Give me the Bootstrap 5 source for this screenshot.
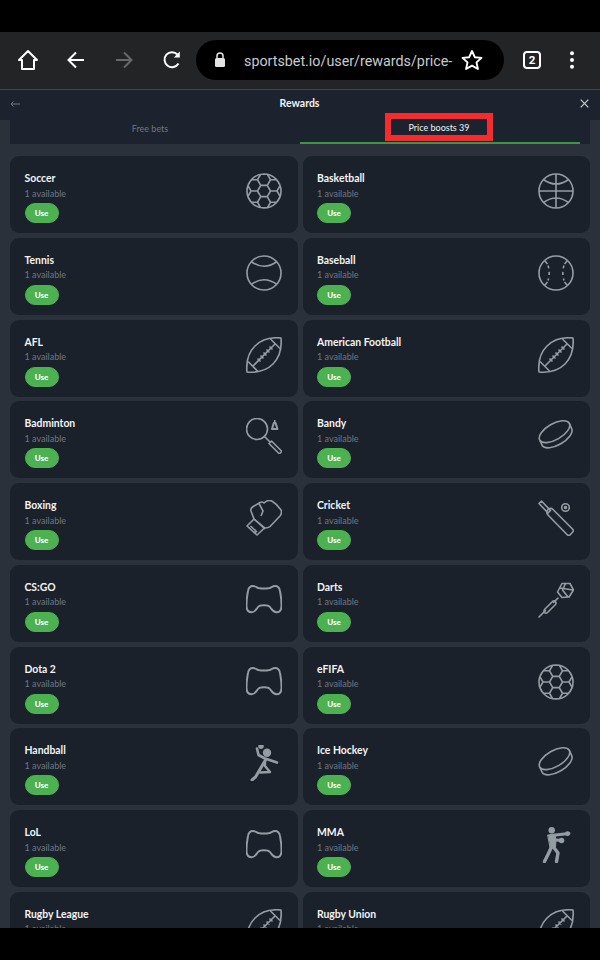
<!DOCTYPE html>
<html lang="en">
<head>
<meta charset="utf-8">
<title>Rewards</title>
<link href="https://cdn.jsdelivr.net/npm/bootstrap@5.3.0/dist/css/bootstrap.min.css" rel="stylesheet">
<style>
html,body{margin:0;background:#000;}
body{width:600px;height:960px;overflow:hidden;font-family:"Lato","Liberation Sans",sans-serif;}
.phone-frame{width:600px;height:960px;}
.blackbar-top{height:32px;background:#000;flex:none;}
.blackbar-bottom{height:32px;background:#000;flex:none;}
.chrome-bar{height:58px;background:#232426;border-bottom:1px solid #44464a;flex:none;padding:0 0 1px;}
.chrome-ico{flex:none;display:block;}
.ico-slot{width:48px;flex:none;display:flex;justify-content:center;}
.slot-home{width:52px;margin-left:2px;}
.slot-back{margin-left:-2px;}
.slot-tabs{margin-left:4px;}
.slot-menu{margin-left:-8px;}
.url-pill{width:308px;height:40px;background:#000;border-radius:20px;padding-left:18px;flex:none;}
.url-text{font-family:Roboto,"Liberation Sans",sans-serif;font-size:14.3px;color:#c9cacc;margin-left:18px;margin-top:3px;width:207px;white-space:nowrap;}
.star-ico{margin-left:10px;}
.defs-holder{position:absolute;width:0;height:0;}
.app-area{flex:1 1 auto;min-height:0;overflow:hidden;background:#2a313a;}
.app-head{height:30px;background:#1c232e;padding:0 11px 3px 10px;flex:none;}
.head-title{font-size:10.5px;font-weight:700;color:#f2f3f4;margin-left:-1px;}
.tabs-wrap{margin:0 10px;height:24px;background:#1c232e;flex:none;}
.tab-cell{width:280px;height:24px;font-size:9px;color:#6f7782;padding-bottom:6px;}
.tab-active{color:#fff;border-bottom:2px solid #3d9645;margin-left:10px;padding-bottom:4px;}
.red-mark{border:6px solid #f52c2f;height:28px;width:108px;margin-top:-4px;margin-left:-2px;padding-top:1px;display:flex;align-items:center;justify-content:center;white-space:nowrap;color:#f4f5f6;}
.sport-grid{display:grid;grid-template-columns:287.5px 287.5px;column-gap:5px;row-gap:4.75px;padding:12px 10px 0;}
.sport-tile{height:77px;background:#1b212b;border-radius:9px;padding:15px 16px 0 14.5px;}
.sport-name{font-size:10.4px;font-weight:700;line-height:14px;color:#f3f4f5;}
.sport-sub{font-size:9px;line-height:13px;margin-top:1.5px;color:#6e7681;}
.btn.use-pill{--bs-btn-bg:#4cb151;--bs-btn-color:#fff;--bs-btn-border-color:#4cb151;width:34px;height:20px;padding:0;font-size:8px;font-weight:900;line-height:18px;border-radius:10px;margin-top:3.5px;display:block;}
.sport-ico{width:36px;height:36px;flex:none;margin-top:2px;color:#959da4;}
</style>
</head>
<body>
<svg class="defs-holder" aria-hidden="true">
<defs>
<clipPath id="ball-clip"><circle cx="18" cy="18" r="17"/></clipPath>
<symbol id="i-soccer" viewBox="0 0 36 36"><g fill="none" stroke="currentColor" stroke-width="1.6" stroke-linejoin="round"><circle cx="18" cy="18" r="17"/><g clip-path="url(#ball-clip)"><path d="M11.500 18l3.250-5.630h6.500l3.250 5.630-3.250 5.630h-6.500zM11.500 6.740l3.250-5.630h6.500l3.250 5.630-3.250 5.630h-6.500zM11.500 29.260l3.250-5.630h6.500l3.250 5.630-3.250 5.630h-6.500zM1.750 12.370l3.250-5.630h6.500l3.250 5.630-3.250 5.630h-6.500zM21.250 12.370l3.250-5.630h6.500l3.250 5.630-3.250 5.630h-6.500zM1.750 23.630l3.250-5.630h6.500l3.250 5.630-3.250 5.630h-6.500zM21.250 23.630l3.250-5.630h6.500l3.250 5.630-3.250 5.630h-6.500z"/></g></g></symbol>
<symbol id="i-basket" viewBox="0 0 36 36"><g fill="none" stroke="currentColor" stroke-width="1.600"><circle cx="18" cy="18" r="17"/><path d="M1 18h34M18 1v34M5.500 6.500Q18 15.500 30.500 6.500M5.500 29.500Q18 20.500 30.500 29.500"/></g></symbol>
<symbol id="i-tennis" viewBox="0 0 36 36"><g fill="none" stroke="currentColor" stroke-width="1.600"><circle cx="18" cy="18" r="17"/><path d="M5 6.500Q18 16 31 6.500M5 29.500Q18 20 31 29.500"/></g></symbol>
<symbol id="i-baseball" viewBox="0 0 36 36"><g fill="none" stroke="currentColor" stroke-width="1.600"><circle cx="18" cy="18" r="17"/><path d="M6.500 5.500L9.500 9M29.500 5.500L26.500 9M6.500 30.500L9.500 27M29.500 30.500L26.500 27"/><path stroke-dasharray="3 3.500" d="M10 10.500c1.600 4.500 1.600 10.500 0 15M26 10.500c-1.600 4.500-1.600 10.500 0 15"/></g></symbol>
<symbol id="i-football" viewBox="0 0 36 36"><g fill="none" stroke="currentColor" stroke-width="1.600" stroke-linejoin="round"><path d="M35 1c1 11-2 20-8 26s-15 9-26 8c-1-10 1-19 8-26s16-9 26-8z"/><path d="M24.500 2l9.500 9.500M2 24.500l9.500 9.500M6.500 29.500L29.500 6.500M11.500 21.500l3 3M14.500 18.500l3 3M17.500 15.500l3 3M20.500 12.500l3 3M23.500 9.500l3 3"/></g></symbol>
<symbol id="i-badminton" viewBox="0 0 36 36"><g fill="none" stroke="currentColor" stroke-width="1.600" stroke-linejoin="round"><circle cx="11" cy="11" r="10.500"/><path d="M18.500 18.500l5.500 5.500M23 25.500l2.500-2.500 9.500 9.500c.6.600.6 1.200 0 1.800l-.7.700c-.6.600-1.200.6-1.800 0z"/><path d="M26 11l1.800-6h1.800l1.800 6z" stroke-width="2"/><path d="M28.700 2v2"/></g></symbol>
<symbol id="i-boxing" viewBox="0 0 36 36"><g fill="none" stroke="currentColor" stroke-width="1.600" stroke-linejoin="round"><path d="M8 19L5 11c-.5-2 0-3 1.500-4L14 2.500c1.500-.8 3-.5 4 .5 2-2 5.500-3.200 8.500-1.500 3.500 2 6.500 5.500 8.500 8.500 1 2 .5 4-1 6L24 26.500c-1.500 1.500-3.500 1.500-5 1.500z"/><path d="M13 3.500l4 7.500-2 5M8 19l11 10M8 19l-7 7 10 9 7.500-7M4.500 26l6 5.500-2.500 1-5-5"/></g></symbol>
<symbol id="i-hockey" viewBox="0 0 36 36"><g fill="none" stroke="currentColor" stroke-width="1.600"><ellipse cx="16.500" cy="13.700" rx="17" ry="8" transform="rotate(-30 16.500 13.700)"/><path d="M1.800 22.200L4.300 27.700A17 8 -30 0 0 33.700 10.700L31.200 5.200"/></g></symbol>
<symbol id="i-cricket" viewBox="0 0 36 36"><g fill="none" stroke="currentColor" stroke-width="1.600" stroke-linejoin="round"><path d="M1 3.500L3.500 1l9 9.500-2.500 2.500zM10 9.500c2-1.500 3.500-1.500 5 0L34.500 29c1 1 1 2 .2 3l-2.500 2.700c-1 1-2 1-3 0L10 15c-1.500-1.500-1.500-3.500 0-5.500z"/><circle cx="27.500" cy="7.500" r="3.800"/><circle cx="27.500" cy="7.500" r="1" fill="currentColor"/></g></symbol>
<symbol id="i-pad" viewBox="0 0 36 36"><path fill="none" stroke="currentColor" stroke-width="1.900" stroke-linejoin="round" d="M7 4C9.500 4 10.500 5.500 12.500 6 16 6.700 20 6.700 23.500 6 25.500 5.500 26.500 4 29 4 32 4 33.500 6 34 9 34.800 13 35.500 19 35.500 23.500 35.500 27.500 34 30.300 30.500 30.300 27 30.300 26 27.500 24 25 22 22.600 14 22.600 12 25 10 27.500 9 30.300 5.500 30.300 2 30.300.5 27.500.5 23.500.5 19 1.200 13 2 9 2.500 6 4 4 7 4z"/></symbol>
<symbol id="i-darts" viewBox="0 0 36 36"><g fill="none" stroke="currentColor" stroke-width="1.600" stroke-linejoin="round" stroke-linecap="round"><path d="M1 35l6.500-6.500M15.500 20.500l4.500-4.500"/><path d="M6.500 27.500l8-8c1-1 2.200-1 3 0s.8 2 0 3l-8 8c-1 1-2.200 1-3 0s-.8-2 0-3z"/><path d="M24 1.500h8l3.500 6.500-4.500 7-7 .5-4.500-5.500zM27.500 1.500l-3 6.500 5.500 7M21.500 6l13.500 2"/></g></symbol>
<symbol id="i-handball" viewBox="0 0 36 36"><g fill="currentColor" stroke="currentColor" stroke-linecap="round" stroke-linejoin="round"><circle cx="15" cy="1.300" r="2.700" stroke="none"/><circle cx="21" cy="7.800" r="4.200" stroke="none"/><path fill="none" stroke-width="2.600" d="M11 3.500l1.500 6.500 6.500 3.500 12 4"/><path fill="none" stroke-width="3" d="M19.500 15L9.500 32 6 35"/><path fill="none" stroke-width="2.400" d="M19 17v4l5 6-10 .5"/></g></symbol>
<symbol id="i-mma" viewBox="0 0 36 36"><g fill="currentColor" stroke="currentColor" stroke-linecap="round" stroke-linejoin="round"><circle cx="13.700" cy="3.300" r="3.200" stroke="none"/><path fill="none" stroke-width="2.800" d="M13 8.500L31 6.500M13.500 12.500l10 1"/><path stroke-width="1" d="M10 8l7-.5 1 6-.5 6.500-5 1z"/><path fill="none" stroke-width="3.400" d="M13.500 20L10 27.500 6.500 34.500M15.500 20l4.500 6-1.500 8.500"/><circle cx="29.500" cy="6.700" r="2.400" stroke="none"/><circle cx="23.500" cy="13.500" r="2.800" stroke="none"/></g></symbol>
</defs>
</svg>

<div class="phone-frame d-flex flex-column">
  <div class="blackbar-top"></div>
  <div class="chrome-bar d-flex align-items-center">
    <div class="ico-slot slot-home"><svg class="chrome-ico" width="22" height="22" viewBox="0 0 22 22" fill="none" stroke="#fff" stroke-width="2" stroke-linejoin="round"><path d="M11 2L2 11h3v9h12v-9h3z"/></svg></div>
    <div class="ico-slot slot-back"><svg class="chrome-ico" width="20" height="20" viewBox="0 0 20 20" fill="none" stroke="#fff" stroke-width="2"><path d="M18 10H3M10 2.500L2.500 10l7.500 7.500"/></svg></div>
    <div class="ico-slot"><svg class="chrome-ico" width="20" height="20" viewBox="0 0 20 20" fill="none" stroke="#66686b" stroke-width="2"><path d="M2 10h15M10 2.500l7.500 7.500-7.500 7.500"/></svg></div>
    <div class="ico-slot"><svg class="chrome-ico" width="20" height="20" viewBox="0 0 20 20" fill="none" stroke="#fff" stroke-width="2"><path d="M16.500 13.500A7.500 7.500 0 1 1 15.500 4.500"/><path d="M17.800 1.500v6h-6z" fill="#fff" stroke="none"/></svg></div>
    <div class="url-pill d-flex align-items-center">
      <svg class="chrome-ico" width="12" height="16" viewBox="0 0 12 16"><path d="M3 6V4a3 3 0 0 1 6 0v2" fill="none" stroke="#e4e4e4" stroke-width="1.500"/><rect x="1" y="6" width="10" height="9" rx="1.500" fill="#e4e4e4"/></svg>
      <span class="url-text">sportsbet.io/user/rewards/price-</span>
      <svg class="chrome-ico star-ico" width="22" height="22" viewBox="0 0 22 22" fill="none" stroke="#fff" stroke-width="1.900" stroke-linejoin="round"><path d="M11 2l2.800 6.200 6.700.7-5 4.500 1.400 6.600L11 16.700 5.100 20l1.400-6.600-5-4.500 6.700-.7z"/></svg>
    </div>
    <div class="ico-slot slot-tabs"><svg class="chrome-ico" width="18" height="18" viewBox="0 0 18 18"><rect x="1" y="1" width="16" height="16" rx="3" fill="none" stroke="#fff" stroke-width="2"/><text x="9" y="13.400" text-anchor="middle" font-family="Roboto,Liberation Sans,sans-serif" font-size="11.500" font-weight="700" fill="#fff">2</text></svg></div>
    <div class="ico-slot slot-menu"><svg class="chrome-ico" width="6" height="18" viewBox="0 0 6 18" fill="#fff"><circle cx="3" cy="2.200" r="2"/><circle cx="3" cy="9" r="2"/><circle cx="3" cy="15.800" r="2"/></svg></div>
  </div>
  <div class="app-area d-flex flex-column">
    <div class="app-head d-flex align-items-center justify-content-between">
      <svg width="10" height="8" viewBox="0 0 10 8" fill="none" stroke="#6f7782" stroke-width="1"><path d="M10 4H1M3.500 1.500L1 4l2.500 2.500"/></svg>
      <span class="head-title">Rewards</span>
      <svg width="9" height="9" viewBox="0 0 9 9" fill="none" stroke="#c9ccd0" stroke-width="1.200"><path d="M.7.700l7.600 7.600M8.300.700L.7 8.300"/></svg>
    </div>
    <div class="tabs-wrap d-flex">
      <div class="tab-cell d-flex align-items-center justify-content-center">Free bets</div>
      <div class="tab-cell tab-active d-flex align-items-center justify-content-center"><span class="red-mark">Price boosts 39</span></div>
    </div>
    <div class="sport-grid">
      <div class="sport-tile d-flex justify-content-between"><div><div class="sport-name">Soccer</div><div class="sport-sub">1 available</div><button class="btn use-pill">Use</button></div><svg class="sport-ico"><use href="#i-soccer"/></svg></div>
      <div class="sport-tile d-flex justify-content-between"><div><div class="sport-name">Basketball</div><div class="sport-sub">1 available</div><button class="btn use-pill">Use</button></div><svg class="sport-ico"><use href="#i-basket"/></svg></div>
      <div class="sport-tile d-flex justify-content-between"><div><div class="sport-name">Tennis</div><div class="sport-sub">1 available</div><button class="btn use-pill">Use</button></div><svg class="sport-ico"><use href="#i-tennis"/></svg></div>
      <div class="sport-tile d-flex justify-content-between"><div><div class="sport-name">Baseball</div><div class="sport-sub">1 available</div><button class="btn use-pill">Use</button></div><svg class="sport-ico"><use href="#i-baseball"/></svg></div>
      <div class="sport-tile d-flex justify-content-between"><div><div class="sport-name">AFL</div><div class="sport-sub">1 available</div><button class="btn use-pill">Use</button></div><svg class="sport-ico"><use href="#i-football"/></svg></div>
      <div class="sport-tile d-flex justify-content-between"><div><div class="sport-name">American Football</div><div class="sport-sub">1 available</div><button class="btn use-pill">Use</button></div><svg class="sport-ico"><use href="#i-football"/></svg></div>
      <div class="sport-tile d-flex justify-content-between"><div><div class="sport-name">Badminton</div><div class="sport-sub">1 available</div><button class="btn use-pill">Use</button></div><svg class="sport-ico"><use href="#i-badminton"/></svg></div>
      <div class="sport-tile d-flex justify-content-between"><div><div class="sport-name">Bandy</div><div class="sport-sub">1 available</div><button class="btn use-pill">Use</button></div><svg class="sport-ico"><use href="#i-hockey"/></svg></div>
      <div class="sport-tile d-flex justify-content-between"><div><div class="sport-name">Boxing</div><div class="sport-sub">1 available</div><button class="btn use-pill">Use</button></div><svg class="sport-ico"><use href="#i-boxing"/></svg></div>
      <div class="sport-tile d-flex justify-content-between"><div><div class="sport-name">Cricket</div><div class="sport-sub">1 available</div><button class="btn use-pill">Use</button></div><svg class="sport-ico"><use href="#i-cricket"/></svg></div>
      <div class="sport-tile d-flex justify-content-between"><div><div class="sport-name">CS:GO</div><div class="sport-sub">1 available</div><button class="btn use-pill">Use</button></div><svg class="sport-ico"><use href="#i-pad"/></svg></div>
      <div class="sport-tile d-flex justify-content-between"><div><div class="sport-name">Darts</div><div class="sport-sub">1 available</div><button class="btn use-pill">Use</button></div><svg class="sport-ico"><use href="#i-darts"/></svg></div>
      <div class="sport-tile d-flex justify-content-between"><div><div class="sport-name">Dota 2</div><div class="sport-sub">1 available</div><button class="btn use-pill">Use</button></div><svg class="sport-ico"><use href="#i-pad"/></svg></div>
      <div class="sport-tile d-flex justify-content-between"><div><div class="sport-name">eFIFA</div><div class="sport-sub">1 available</div><button class="btn use-pill">Use</button></div><svg class="sport-ico"><use href="#i-soccer"/></svg></div>
      <div class="sport-tile d-flex justify-content-between"><div><div class="sport-name">Handball</div><div class="sport-sub">1 available</div><button class="btn use-pill">Use</button></div><svg class="sport-ico"><use href="#i-handball"/></svg></div>
      <div class="sport-tile d-flex justify-content-between"><div><div class="sport-name">Ice Hockey</div><div class="sport-sub">1 available</div><button class="btn use-pill">Use</button></div><svg class="sport-ico"><use href="#i-hockey"/></svg></div>
      <div class="sport-tile d-flex justify-content-between"><div><div class="sport-name">LoL</div><div class="sport-sub">1 available</div><button class="btn use-pill">Use</button></div><svg class="sport-ico"><use href="#i-pad"/></svg></div>
      <div class="sport-tile d-flex justify-content-between"><div><div class="sport-name">MMA</div><div class="sport-sub">1 available</div><button class="btn use-pill">Use</button></div><svg class="sport-ico"><use href="#i-mma"/></svg></div>
      <div class="sport-tile d-flex justify-content-between"><div><div class="sport-name">Rugby League</div><div class="sport-sub">1 available</div><button class="btn use-pill">Use</button></div><svg class="sport-ico"><use href="#i-football"/></svg></div>
      <div class="sport-tile d-flex justify-content-between"><div><div class="sport-name">Rugby Union</div><div class="sport-sub">1 available</div><button class="btn use-pill">Use</button></div><svg class="sport-ico"><use href="#i-football"/></svg></div>
    </div>
  </div>
  <div class="blackbar-bottom"></div>
</div>
<script src="https://cdn.jsdelivr.net/npm/bootstrap@5.3.0/dist/js/bootstrap.bundle.min.js"></script>
</body>
</html>
